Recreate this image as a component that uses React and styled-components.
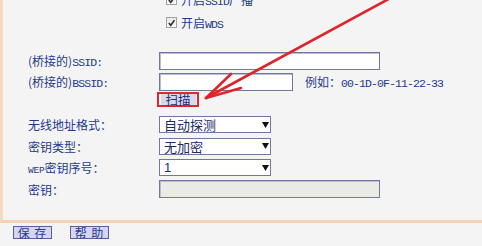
import React from 'react';
import styled, { createGlobalStyle } from 'styled-components';

const GlobalStyle = createGlobalStyle`
	body {
		margin: 0;
		background: #f4f4f4;
		font-family: 'Noto Sans CJK SC', 'Liberation Sans', sans-serif;
		font-size: 12px;
		color: #243a8c;
	}
`;

const App = () => {
	return (
		<StylePage>
			<GlobalStyle />
			<StylePanel>
				<StyleChecks>
					<CheckItem label={<>开启<Latin>SSID</Latin>广播</>} />
					<CheckItem label={<>开启<Latin>WDS</Latin></>} />
				</StyleChecks>
				<StyleForm>
					<StyleRow>
						<StyleLabel>(桥接的)<Latin>SSID:</Latin></StyleLabel>
						<StyleInput $w={221} />
					</StyleRow>
					<StyleRow>
						<StyleLabel>(桥接的)<Latin>BSSID:</Latin></StyleLabel>
						<StyleInput $w={134} />
						<StyleHint>
							例如：<Latin>00-1D-0F-11-22-33</Latin>
						</StyleHint>
					</StyleRow>
					<StyleRow $h={22} $align='flex-start'>
						<StyleLabel />
						<StyleScanMark>
							<StyleScan>扫描</StyleScan>
						</StyleScanMark>
					</StyleRow>
					<StyleRow>
						<StyleLabel>无线地址格式：</StyleLabel>
						<Select value='自动探测' />
					</StyleRow>
					<StyleRow $h={22}>
						<StyleLabel>密钥类型：</StyleLabel>
						<Select value='无加密' />
					</StyleRow>
					<StyleRow>
						<StyleLabel><Latin $small>WEP</Latin>密钥序号：</StyleLabel>
						<Select value='1' />
					</StyleRow>
					<StyleRow $h={22}>
						<StyleLabel>密钥：</StyleLabel>
						<StyleInput $w={221} $disabled />
					</StyleRow>
				</StyleForm>
			</StylePanel>
			<StyleFooter>
				<StyleButton>保 存</StyleButton>
				<StyleButton>帮 助</StyleButton>
			</StyleFooter>
			<StyleArrow viewBox='0 0 482 246' width='482' height='246'>
				<g stroke='#e0242c' strokeWidth='2.6' strokeLinecap='round' fill='none'>
					<line x1='396' y1='-5' x2='206' y2='98' />
					<line x1='206' y1='98' x2='231' y2='74' />
					<line x1='206' y1='98' x2='241' y2='88' />
				</g>
			</StyleArrow>
		</StylePage>
	);
};

const CheckItem = ({ label }) => (
	<StyleCheckRow>
		<StyleBox>
			<svg width='10' height='10' viewBox='0 0 10 10'>
				<path d='M2 5 L4.2 7.6 L8.2 2' stroke='#333' strokeWidth='1.8' fill='none' />
			</svg>
		</StyleBox>
		<span>{label}</span>
	</StyleCheckRow>
);

const Select = ({ value }) => (
	<StyleSelect>
		<span>{value}</span>
		<svg width='7' height='6' viewBox='0 0 7 6'>
			<polygon points='0,0 7,0 3.5,6' fill='#111' />
		</svg>
	</StyleSelect>
);

const StylePage = styled.div`
	position: relative;
	width: 482px;
	height: 246px;
	overflow: hidden;
`;

const StylePanel = styled.div`
	box-sizing: border-box;
	height: 223px;
	overflow: hidden;
	padding-left: 25px;
	border-left: 3px solid #f6dac0;
	border-bottom: 3px solid #f4d2b2;
`;

const Latin = styled.span`
	font-family: 'Liberation Mono', monospace;
	font-size: ${(p) => (p.$small ? '9.5px' : '11.5px')};
	letter-spacing: ${(p) => (p.$small ? '-0.2px' : '-0.9px')};
`;

const StyleChecks = styled.div`
	margin: -12px 0 0 138px;
`;

const StyleCheckRow = styled.div`
	display: flex;
	align-items: center;
	gap: 4px;
	height: 23px;
`;

const StyleBox = styled.span`
	display: flex;
	box-sizing: border-box;
	width: 11px;
	height: 11px;
	border: 1px solid #a2a2a2;
	background: linear-gradient(#e8e8e8, #fafafa);
	align-items: center;
	justify-content: center;
`;

const StyleForm = styled.div`
	margin-top: 16px;
`;

const StyleRow = styled.div`
	display: flex;
	align-items: ${(p) => p.$align || 'center'};
	height: ${(p) => p.$h || 21}px;
`;

const StyleLabel = styled.div`
	width: 131px;
	flex-shrink: 0;
	white-space: nowrap;
`;

const StyleInput = styled.div`
	box-sizing: border-box;
	width: ${(p) => p.$w}px;
	height: 18px;
	border: 1px solid #6f789e;
	box-shadow: inset 1px 1px 0 #b9bdd3;
	background: ${(p) => (p.$disabled ? '#ebebe6' : '#ffffff')};
`;

const StyleHint = styled.span`
	margin-left: 12px;
	white-space: nowrap;
`;

const StyleScanMark = styled.div`
	box-sizing: border-box;
	margin-left: -2px;
	width: 42px;
	height: 15px;
	border: 2px solid #e3262c;
	display: flex;
	align-items: center;
	justify-content: center;
`;

const StyleScan = styled.div`
	width: 35px;
	height: 11px;
	line-height: 11px;
	text-align: center;
	background: #d8d8e8;
	color: #1d2f7a;
	font-size: 12.5px;
`;

const StyleSelect = styled.div`
	box-sizing: border-box;
	width: 112px;
	height: 17px;
	display: flex;
	align-items: center;
	justify-content: space-between;
	padding: 0 1px 0 4px;
	border: 1px solid #6f789e;
	background: #ffffff;
	font-family: 'Liberation Sans', 'Noto Sans CJK SC', sans-serif;
	font-size: 13px;
	color: #1c2a66;
`;

const StyleFooter = styled.div`
	display: flex;
	gap: 18px;
	padding: 3px 0 0 13px;
`;

const StyleButton = styled.div`
	box-sizing: border-box;
	width: 39px;
	height: 13px;
	line-height: 11px;
	text-align: center;
	border: 1px solid #5a5e98;
	background: #d6d6f4;
	color: #243a8c;
	letter-spacing: 1px;
`;

const StyleArrow = styled.svg`
	position: absolute;
	top: 0;
	left: 0;
	pointer-events: none;
`;

export default App;
